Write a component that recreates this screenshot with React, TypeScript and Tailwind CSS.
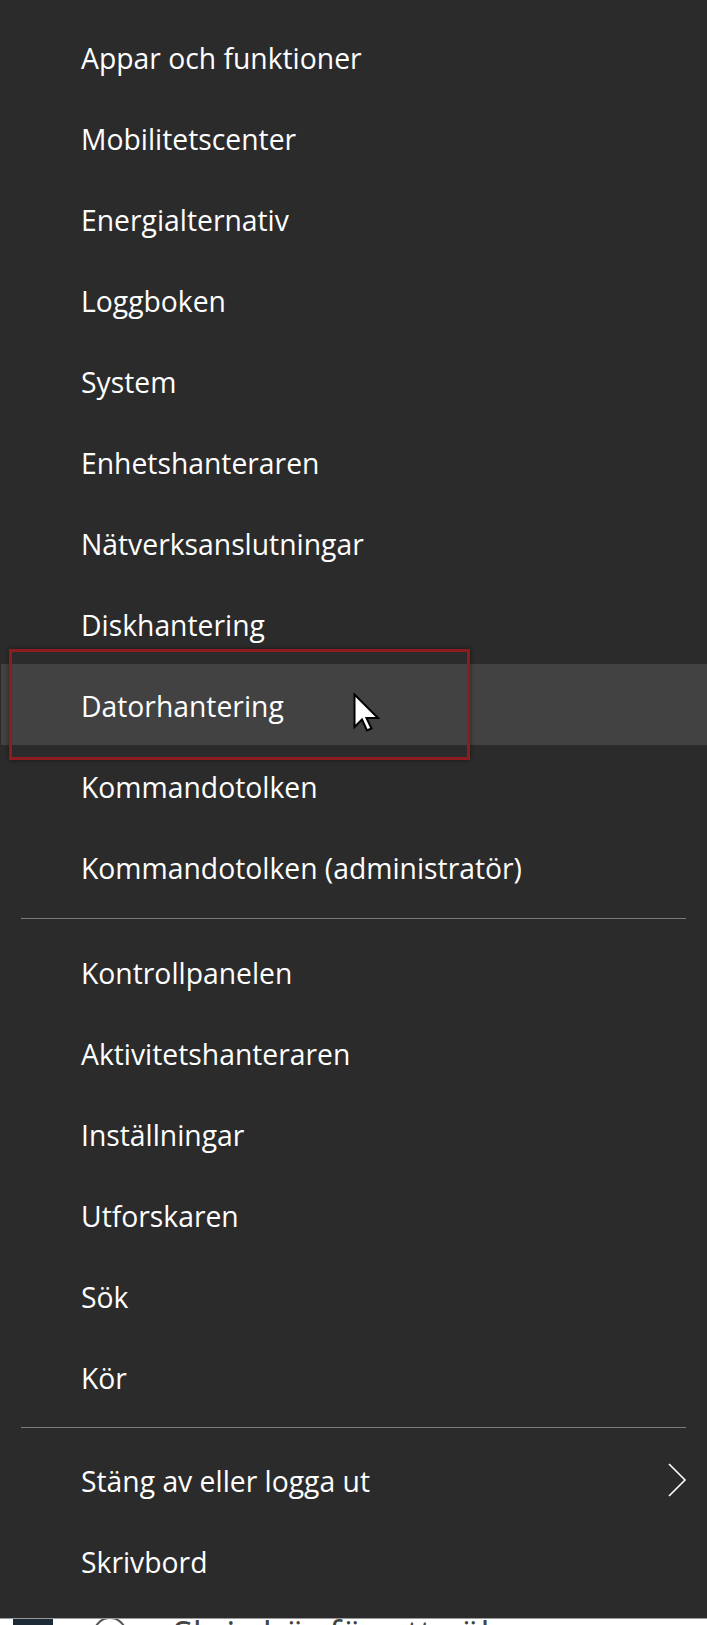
import React from "react";

const groupOne = [
  "Appar och funktioner",
  "Mobilitetscenter",
  "Energialternativ",
  "Loggboken",
  "System",
  "Enhetshanteraren",
  "Nätverksanslutningar",
  "Diskhantering",
  "Datorhantering",
  "Kommandotolken",
  "Kommandotolken (administratör)",
];

const groupTwo = [
  "Kontrollpanelen",
  "Aktivitetshanteraren",
  "Inställningar",
  "Utforskaren",
  "Sök",
  "Kör",
];

const MenuRow: React.FC<{ label: string; active?: boolean; submenu?: boolean }> = ({
  label,
  active,
  submenu,
}) => (
  <div
    className={`h-[81px] flex items-center pt-[4px] ${
      active ? "bg-[#424242] ml-px pl-[80px]" : "pl-[81px]"
    }`}
  >
    <span className="text-[28.3px] leading-none text-white">{label}</span>
    {submenu && (
      <svg
        width="20"
        height="34"
        viewBox="0 0 20 34"
        className="ml-auto mr-[20px] -mt-[4px]"
      >
        <path d="M2 1 L18 17 L2 33" fill="none" stroke="#ffffff" strokeWidth="1.6" />
      </svg>
    )}
  </div>
);

const Separator: React.FC<{ className?: string }> = ({ className }) => (
  <div className={`mx-[21px] h-px bg-[#7a7a7a] ${className ?? ""}`} />
);

export default function App() {
  return (
    <div
      className="relative w-full h-[1625px] bg-[#2b2b2b] flex flex-col overflow-hidden"
      style={{ fontFamily: '"Open Sans", "Noto Sans", sans-serif' }}
    >
      <div className="pt-4">
        {groupOne.map((label) => (
          <MenuRow key={label} label={label} active={label === "Datorhantering"} />
        ))}
      </div>

      <Separator className="mt-[11px]" />

      <div className="mt-[12px]">
        {groupTwo.map((label) => (
          <MenuRow key={label} label={label} />
        ))}
      </div>

      <Separator className="mt-[10px]" />

      <div className="mt-[11px]">
        <MenuRow label="Stäng av eller logga ut" submenu />
        <MenuRow label="Skrivbord" />
      </div>

      <div className="flex-1" />

      {/* taskbar peeking out below the menu */}
      <div className="h-[7px] shrink-0 bg-white border-t border-[#9a9a9a] flex items-start overflow-hidden">
        <div className="ml-[13px] w-[40px] h-full bg-[#1d2b36]" />
        <div className="ml-[40px] w-[34px] h-[34px] rounded-full border-2 border-[#555] -mt-[2px]" />
        <span className="ml-[46px] -mt-[3px] text-[36px] leading-none text-[#444]">
          Skriv här för att söka
        </span>
      </div>

      {/* annotation frame */}
      <div className="absolute left-[9px] top-[649px] w-[461px] h-[111px] border-[3px] border-[#8d1b1f] shadow-[0_0_5px_rgba(0,0,0,0.45)]" />

      {/* mouse pointer */}
      <svg
        className="absolute left-[353px] top-[693px]"
        width="28"
        height="40"
        viewBox="0 0 28 40"
      >
        <path
          d="M1.5 1.5 L1.5 34 L9 26.5 L14 37.5 L18.5 35.5 L13.5 25 L25 25 Z"
          fill="#ffffff"
          stroke="#000000"
          strokeWidth="2"
          strokeLinejoin="miter"
        />
      </svg>
    </div>
  );
}
